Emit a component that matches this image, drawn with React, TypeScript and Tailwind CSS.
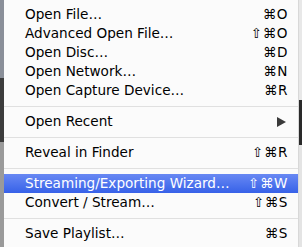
import React from "react";

type Item =
  | { kind: "item"; label: string; keys?: string; submenu?: boolean; active?: boolean }
  | { kind: "sep" };

const items: Item[] = [
  { kind: "item", label: "Open File…", keys: "⌘O" },
  { kind: "item", label: "Advanced Open File…", keys: "⇧⌘O" },
  { kind: "item", label: "Open Disc…", keys: "⌘D" },
  { kind: "item", label: "Open Network…", keys: "⌘N" },
  { kind: "item", label: "Open Capture Device…", keys: "⌘R" },
  { kind: "sep" },
  { kind: "item", label: "Open Recent", submenu: true },
  { kind: "sep" },
  { kind: "item", label: "Reveal in Finder", keys: "⇧⌘R" },
  { kind: "sep" },
  { kind: "item", label: "Streaming/Exporting Wizard…", keys: "⇧⌘W", active: true },
  { kind: "item", label: "Convert / Stream…", keys: "⇧⌘S" },
  { kind: "sep" },
  { kind: "item", label: "Save Playlist…", keys: "⌘S" },
];

const MenuRow: React.FC<{ item: Item }> = ({ item }) => {
  if (item.kind === "sep") {
    return (
      <div className="h-3 flex items-center">
        <div className="h-px w-full bg-[#e0e0e0]" />
      </div>
    );
  }
  return (
    <div
      className={`h-[19px] flex items-center justify-between pl-[21px] pr-[10px] ${
        item.active
          ? "bg-gradient-to-b from-[#6888f3] to-[#3761e8] text-white"
          : "text-black"
      }`}
    >
      <span>{item.label}</span>
      {item.keys && <span className="tracking-[0.5px]">{item.keys}</span>}
      {item.submenu && (
        <svg width="9" height="10" viewBox="0 0 9 10" className="mr-[2px]">
          <path d="M0 0 L9 5 L0 10 Z" fill="#3a3a3a" />
        </svg>
      )}
    </div>
  );
};

export default function App() {
  return (
    <div className="w-[302px] h-[247px] flex overflow-hidden bg-[#f3f3f3] font-['DejaVu_Sans',sans-serif] text-[13.6px]">
      <div className="w-[4px] flex flex-col">
        <div className="h-[78px] bg-[#8a8f99]" />
        <div className="h-[64px] bg-[#3c3c3c]" />
        <div className="flex-1 bg-[#9a9a9a]" />
      </div>
      <div className="w-[294px] bg-[#fbfbfb] pt-[5px] flex flex-col">
        {items.map((it, i) => (
          <MenuRow key={i} item={it} />
        ))}
      </div>
      <div className="flex-1 flex flex-col border-l border-[#d8d8d8]">
        <div className="h-[100px] bg-[#e8e8e8]" />
        <div className="h-[45px] bg-[#2a2a2a]" />
        <div className="flex-1 bg-[#e4e4e4]" />
      </div>
    </div>
  );
}
